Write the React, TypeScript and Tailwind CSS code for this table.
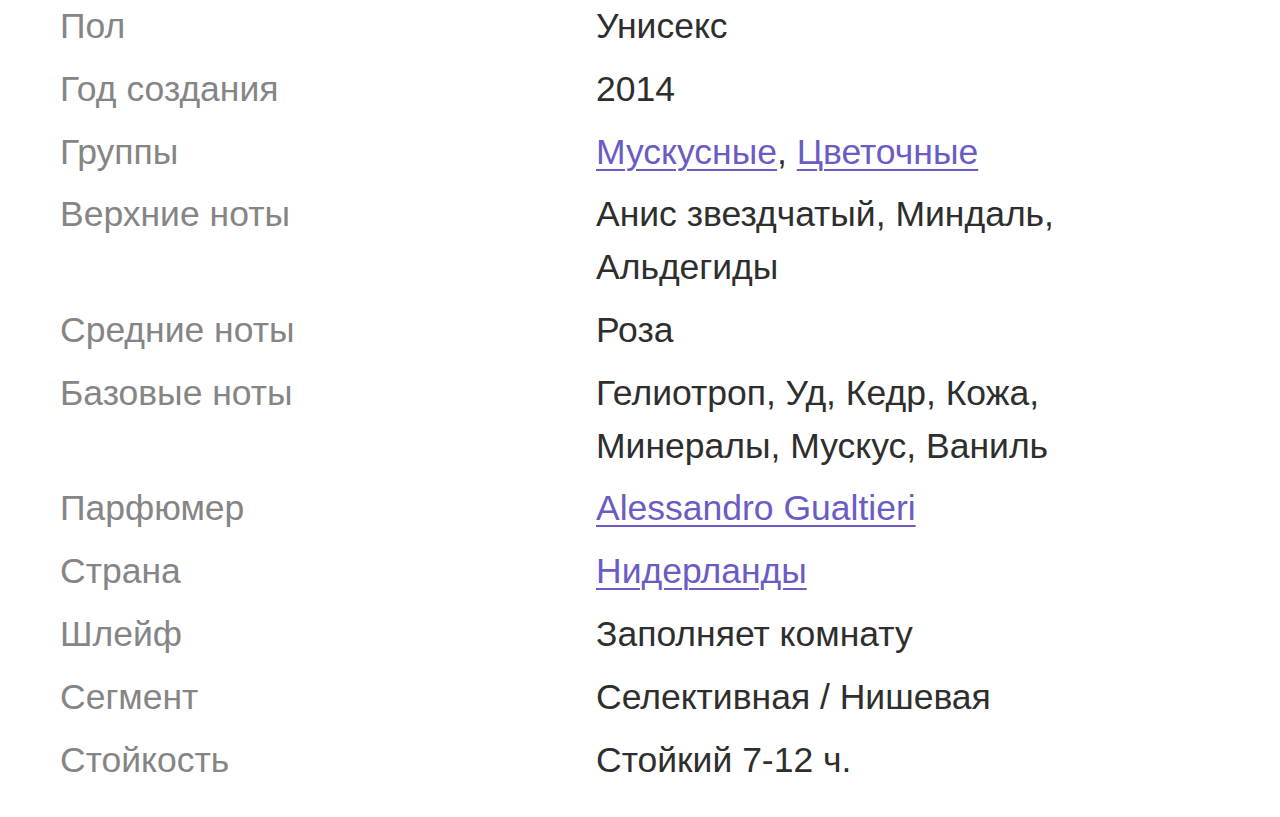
const rows: { label: string; value: React.ReactNode }[] = [
  { label: "Пол", value: "Унисекс" },
  { label: "Год создания", value: "2014" },
  {
    label: "Группы",
    value: (
      <>
        <a href="#" className="text-[#6a5cc4] underline underline-offset-[5px] decoration-2">
          Мускусные
        </a>
        ,{" "}
        <a href="#" className="text-[#6a5cc4] underline underline-offset-[5px] decoration-2">
          Цветочные
        </a>
      </>
    ),
  },
  { label: "Верхние ноты", value: "Анис звездчатый, Миндаль, Альдегиды" },
  { label: "Средние ноты", value: "Роза" },
  { label: "Базовые ноты", value: "Гелиотроп, Уд, Кедр, Кожа, Минералы, Мускус, Ваниль" },
  {
    label: "Парфюмер",
    value: (
      <a href="#" className="text-[#6a5cc4] underline underline-offset-[5px] decoration-2">
        Alessandro Gualtieri
      </a>
    ),
  },
  {
    label: "Страна",
    value: (
      <a href="#" className="text-[#6a5cc4] underline underline-offset-[5px] decoration-2">
        Нидерланды
      </a>
    ),
  },
  { label: "Шлейф", value: "Заполняет комнату" },
  { label: "Сегмент", value: "Селективная / Нишевая" },
  { label: "Стойкость", value: "Стойкий 7-12 ч." },
];

export default function App() {
  return (
    <div className="min-h-[817px] bg-white [font-family:'Liberation_Sans',Arial,sans-serif] text-[35.5px] leading-[52.8px]">
      <dl className="grid grid-cols-[536px_540px] gap-y-[10px] pl-[60px]">
        {rows.map((row) => (
          <div key={row.label} className="contents">
            <dt className="text-[#858585]">{row.label}</dt>
            <dd className="text-[#2e2e2e]">{row.value}</dd>
          </div>
        ))}
      </dl>
    </div>
  );
}
